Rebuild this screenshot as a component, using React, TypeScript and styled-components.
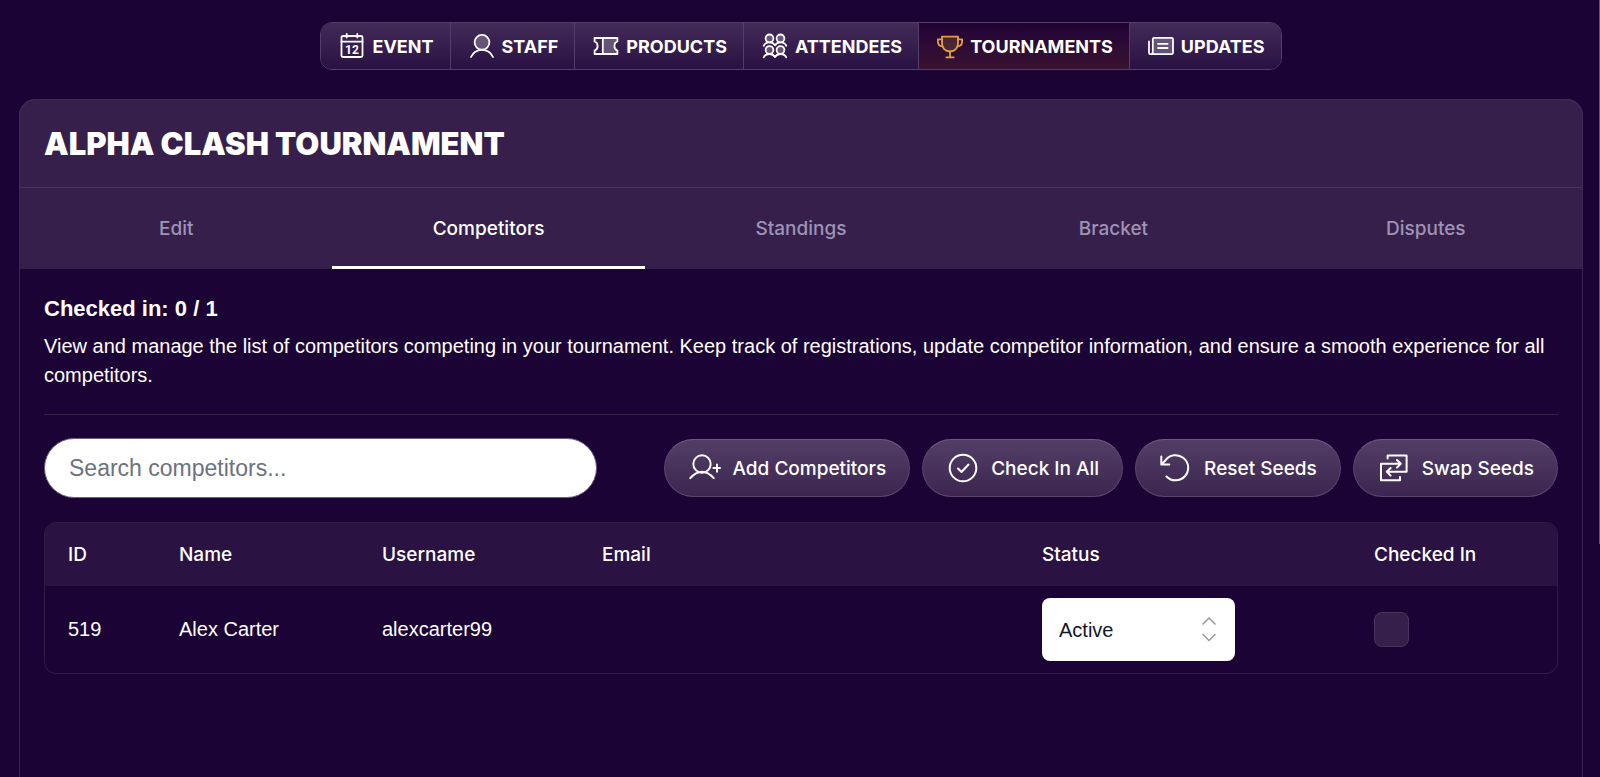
import React, { useState } from "react";
import styled, { createGlobalStyle, css } from "styled-components";

const GlobalStyle = createGlobalStyle`
  *, *::before, *::after { box-sizing: border-box; }
  html, body, #root { height: 100%; }
  body {
    margin: 0;
    background: #1c0336;
    color: #fff;
    font-family: "Liberation Sans", Arial, sans-serif;
    font-size: 20px;
    line-height: 29px;
    overflow: hidden;
  }
`;

const mediumText = css`
  font-family: Inter, "Liberation Sans", sans-serif;
  font-size: 19px;
  font-weight: 500;
`;

const Page = styled.div`
  display: flex;
  flex-direction: column;
  gap: 29px;
  min-height: 100%;
  padding: 22px 17px 0 19px;
`;

const ScrollThumb = styled.div`
  position: fixed;
  top: 0;
  right: 0;
  width: 1px;
  height: 70vh;
  background: #67517c;
`;

const MainNav = styled.nav`
  display: flex;
  align-self: center;
  height: 48px;
  overflow: hidden;
  border: 1px solid #533d69;
  border-radius: 12px;
`;

const NavItem = styled.a<{ $active?: boolean }>`
  display: flex;
  align-items: center;
  gap: 7px;
  padding: 0 16px 0 18px;
  color: #fff;
  background: ${(p) =>
    p.$active
      ? "linear-gradient(#200336, #3a1332)"
      : "linear-gradient(#422b58, #2a1144)"};
  font-family: Inter, "Liberation Sans", sans-serif;
  font-size: 18px;
  font-weight: 700;
  text-decoration: none;
  text-transform: uppercase;

  & + & {
    border-left: 1px solid #533d69;
  }

  svg {
    width: 26px;
    height: 26px;
    color: ${(p) => (p.$active ? "#e0a040" : "#fff")};
  }
`;

const Card = styled.main`
  flex: 1;
  border: 1px solid #3a2451;
  border-bottom: 0;
  border-radius: 16px 16px 0 0;
`;

const CardHeader = styled.header`
  display: flex;
  align-items: center;
  height: 88px;
  padding: 0 24px;
  border-bottom: 1px solid #4a3360;
  border-radius: 16px 16px 0 0;
  background: #36204b;
  box-shadow: 0 0 0 1px #432b59;
`;

const Title = styled.h1`
  margin: 0;
  font-family: Inter, "Liberation Sans", sans-serif;
  font-size: 31px;
  font-weight: 900;
  line-height: 36px;
  text-transform: uppercase;
`;

const TabBar = styled.div`
  display: grid;
  grid-template-columns: repeat(5, 1fr);
  height: 81px;
  background: #36204b;
`;

const Tab = styled.button<{ $active: boolean }>`
  ${mediumText}
  padding: 0;
  border: 0;
  background: none;
  box-shadow: ${(p) => (p.$active ? "inset 0 -3px #fff" : "none")};
  color: ${(p) => (p.$active ? "#fff" : "#9d93b5")};
  cursor: pointer;
`;

const CardBody = styled.section`
  padding: 24px;
`;

const Summary = styled.h2`
  margin: 0 0 7px;
  font-size: 22px;
  font-weight: 700;
  line-height: 32px;
`;

const Description = styled.p`
  margin: 0;
`;

const Divider = styled.hr`
  height: 1px;
  margin: 24px 0 23px;
  border: 0;
  background: #342049;
`;

const Toolbar = styled.div`
  display: flex;
  align-items: center;
  justify-content: space-between;
  gap: 24px;
  margin-bottom: 24px;
`;

const SearchInput = styled.input`
  flex: 0 1 553px;
  min-width: 0;
  height: 60px;
  padding: 0 24px;
  border: 1px solid #6b6080;
  border-radius: 30px;
  background: #fff;
  color: #111827;
  font-family: inherit;
  font-size: 23px;

  &::placeholder {
    color: #6b7280;
    opacity: 1;
  }
`;

const Actions = styled.div`
  display: flex;
  gap: 12px;
`;

const ActionButton = styled.button`
  ${mediumText}
  display: flex;
  align-items: center;
  gap: 12px;
  height: 58px;
  padding: 0 23px 0 24px;
  border: 1px solid #5b4670;
  border-top-color: #705a86;
  border-radius: 29px;
  background: linear-gradient(#523e65, #3c2651);
  color: #fff;
  white-space: nowrap;
  cursor: pointer;

  svg {
    width: 32px;
    height: 32px;
  }
`;

const TableFrame = styled.div`
  overflow: hidden;
  border: 1px solid #321c47;
  border-radius: 12px;
`;

const Table = styled.table`
  width: 100%;
  border-collapse: collapse;
  table-layout: fixed;
  text-align: left;
`;

const HeadCell = styled.th<{ $width?: number }>`
  ${mediumText}
  width: ${(p) => (p.$width ? `${p.$width}px` : "auto")};
  height: 63px;
  padding: 0 0 0 23px;
  background: #2a1242;
`;

const Cell = styled.td`
  height: 87px;
  padding: 0 0 0 23px;
`;

const SelectBox = styled.div`
  position: relative;
  width: 193px;

  svg {
    position: absolute;
    top: 18px;
    right: 18px;
    width: 16px;
    height: 26px;
    color: #9a9a9f;
    pointer-events: none;
  }
`;

const StatusSelect = styled.select`
  display: block;
  width: 100%;
  height: 63px;
  padding: 0 48px 0 17px;
  border: 0;
  border-radius: 8px;
  background: #fff;
  color: #111827;
  font-family: inherit;
  font-size: 20px;
  appearance: none;
`;

const CheckBox = styled.input`
  display: block;
  width: 35px;
  height: 35px;
  margin: 0;
  border: 1px solid #4a3560;
  border-radius: 8px;
  background: #36204b;
  appearance: none;

  &:checked {
    background: #8a6bb0;
  }
`;

const line = {
  fill: "none",
  stroke: "currentColor",
  strokeWidth: 1.8,
  strokeLinecap: "round",
  strokeLinejoin: "round",
  "aria-hidden": true,
} as const;

const tint = { fill: "currentColor", fillOpacity: 0.24 };

const EventIcon = () => (
  <svg viewBox="0 0 26 26" {...line}>
    <rect x="2.5" y="3" width="21" height="21" rx="1.5" />
    <path d="M2.5 8.6H23.5M7.7 1V4.6M18.3 1V4.6" />
    <text x="13" y="20.8" textAnchor="middle" fill="currentColor" stroke="none" fontSize="12" fontWeight="700" fontFamily="Roboto">
      12
    </text>
  </svg>
);

const StaffIcon = () => (
  <svg viewBox="0 0 26 26" {...line}>
    <circle cx="13" cy="9.3" r="7.4" {...tint} />
    <path d="M2 24C4 19.5 8 16.8 13 16.8S22 19.5 24 24" />
  </svg>
);

const TicketIcon = () => (
  <svg viewBox="0 0 26 26" {...line}>
    <path d="M10 5H24.4V8.5C22.6 9 21.4 10.8 21.4 13S22.6 17 24.4 17.5V21H10Z" {...tint} stroke="none" />
    <path d="M1.6 5H24.4V8.5C22.6 9 21.4 10.8 21.4 13S22.6 17 24.4 17.5V21H1.6V17.5C3.4 17 4.6 15.2 4.6 13S3.4 9 1.6 8.5ZM9.8 5V21" />
  </svg>
);

const AttendeesIcon = () => (
  <svg viewBox="0 0 26 26" {...line}>
    <circle cx="7.5" cy="5.4" r="3.9" {...tint} />
    <circle cx="18.5" cy="5.4" r="3.9" {...tint} />
    <circle cx="7.5" cy="17" r="3.9" {...tint} />
    <circle cx="18.5" cy="17" r="3.9" {...tint} />
    <path d="M1.7 12.8C2.7 10.6 4.8 9.4 7.5 9.4S12 10.6 13 12.4C14 10.6 15.8 9.4 18.5 9.4S23.3 10.6 24.3 12.8" />
    <path d="M1.7 24.4C2.7 22.2 4.8 21 7.5 21S12 22.2 13 24C14 22.2 15.8 21 18.5 21S23.3 22.2 24.3 24.4" />
  </svg>
);

const TrophyIcon = () => (
  <svg viewBox="0 0 26 26" {...line}>
    <path d="M5 3.6H21V10.5C21 15 18 18.5 13 18.5S5 15 5 10.5Z" {...tint} fillOpacity={0.18} />
    <path d="M5 6.4H.9V8.5C.9 11.6 2.7 13.2 5.6 13.4M21 6.4H25.1V8.5C25.1 11.6 23.3 13.2 20.4 13.4M13 18.5V24.3M9.3 24.3H16.7" />
  </svg>
);

const UpdatesIcon = () => (
  <svg viewBox="0 0 26 26" {...line}>
    <path d="M4.8 5.6Q4.8 4.8 5.6 4.8H23.6Q25 4.8 25 6.2V19.8Q25 21.2 23.6 21.2H4.8Z" {...tint} stroke="none" />
    <path d="M4.8 19V6.2Q4.8 4.8 6.2 4.8H23.6Q25 4.8 25 6.2V19.8Q25 21.2 23.6 21.2H3.1Q1 21.2 1 19.2V8.4M4.8 19Q4.8 21.2 3 21.2M10 10.8H19.6M10 15H19.6" />
  </svg>
);

const AddUserIcon = () => (
  <svg viewBox="0 0 32 32" {...line} strokeWidth={2}>
    <circle cx="13" cy="12" r="8.7" />
    <path d="M1.3 26.2C4.5 22.5 8.5 19.8 13 19.8S21.5 22.5 24.7 26.2M28 12.5V19.7M24.4 16.1H31" />
  </svg>
);

const CheckCircleIcon = () => (
  <svg viewBox="0 0 32 32" {...line} strokeWidth={2}>
    <circle cx="16" cy="16" r="13.3" />
    <path d="M11 16.5L14.5 20L21.5 12.5" />
  </svg>
);

const ResetIcon = () => (
  <svg viewBox="0 0 32 32" {...line} strokeWidth={2}>
    <path d="M1.3 4.5V12.5H9.3M1.3 12.5L5.3 8.5A12.6 12.6 0 1 1 6.5 24.5" />
  </svg>
);

const SwapIcon = () => (
  <svg viewBox="0 0 32 32" {...line} strokeWidth={2}>
    <path d="M9.6 6.5V3.4H28.6V19.8H8.8M12.6 16L8.8 19.8L12.6 23.6" />
    <path d="M22 25V28.2H3V11.8H22.8M19 8L22.8 11.8L19 15.6" />
  </svg>
);

const ChevronsIcon = () => (
  <svg viewBox="0 0 16 26" {...line} strokeWidth={1.6}>
    <path d="M2 8L8 2L14 8M2 18.5L8 24.5L14 18.5" />
  </svg>
);

const navItems = [
  { label: "Event", Icon: EventIcon },
  { label: "Staff", Icon: StaffIcon },
  { label: "Products", Icon: TicketIcon },
  { label: "Attendees", Icon: AttendeesIcon },
  { label: "Tournaments", Icon: TrophyIcon },
  { label: "Updates", Icon: UpdatesIcon },
];

const tabs = ["Edit", "Competitors", "Standings", "Bracket", "Disputes"];

const actions = [
  { label: "Add Competitors", Icon: AddUserIcon },
  { label: "Check In All", Icon: CheckCircleIcon },
  { label: "Reset Seeds", Icon: ResetIcon },
  { label: "Swap Seeds", Icon: SwapIcon },
];

const columns = [
  { label: "ID", width: 111 },
  { label: "Name", width: 203 },
  { label: "Username", width: 220 },
  { label: "Email" },
  { label: "Status", width: 332 },
  { label: "Checked In", width: 206 },
];

const competitors = [{ id: 519, name: "Alex Carter", username: "alexcarter99", email: "" }];

export default function App() {
  const [tab, setTab] = useState("Competitors");

  return (
    <>
      <GlobalStyle />
      <Page>
        <MainNav aria-label="Event sections">
          {navItems.map(({ label, Icon }) => (
            <NavItem key={label} href={`#${label.toLowerCase()}`} $active={label === "Tournaments"}>
              <Icon />
              {label}
            </NavItem>
          ))}
        </MainNav>

        <Card>
          <CardHeader>
            <Title>Alpha Clash Tournament</Title>
          </CardHeader>
          <TabBar role="tablist">
            {tabs.map((name) => (
              <Tab
                key={name}
                type="button"
                role="tab"
                aria-selected={name === tab}
                $active={name === tab}
                onClick={() => setTab(name)}
              >
                {name}
              </Tab>
            ))}
          </TabBar>

          <CardBody>
            <Summary>Checked in: 0 / 1</Summary>
            <Description>
              View and manage the list of competitors competing in your tournament. Keep track of registrations,
              update competitor information, and ensure a smooth experience for all competitors.
            </Description>
            <Divider />
            <Toolbar>
              <SearchInput type="search" placeholder="Search competitors..." aria-label="Search competitors" />
              <Actions>
                {actions.map(({ label, Icon }) => (
                  <ActionButton key={label} type="button">
                    <Icon />
                    {label}
                  </ActionButton>
                ))}
              </Actions>
            </Toolbar>

            <TableFrame>
              <Table>
                <thead>
                  <tr>
                    {columns.map((column) => (
                      <HeadCell key={column.label} scope="col" $width={column.width}>
                        {column.label}
                      </HeadCell>
                    ))}
                  </tr>
                </thead>
                <tbody>
                  {competitors.map((person) => (
                    <tr key={person.id}>
                      <Cell>{person.id}</Cell>
                      <Cell>{person.name}</Cell>
                      <Cell>{person.username}</Cell>
                      <Cell>{person.email}</Cell>
                      <Cell>
                        <SelectBox>
                          <StatusSelect aria-label={`Status of ${person.name}`} defaultValue="Active">
                            <option>Active</option>
                            <option>Dropped</option>
                          </StatusSelect>
                          <ChevronsIcon />
                        </SelectBox>
                      </Cell>
                      <Cell>
                        <CheckBox type="checkbox" aria-label={`${person.name} checked in`} />
                      </Cell>
                    </tr>
                  ))}
                </tbody>
              </Table>
            </TableFrame>
          </CardBody>
        </Card>
      </Page>
      <ScrollThumb />
    </>
  );
}
